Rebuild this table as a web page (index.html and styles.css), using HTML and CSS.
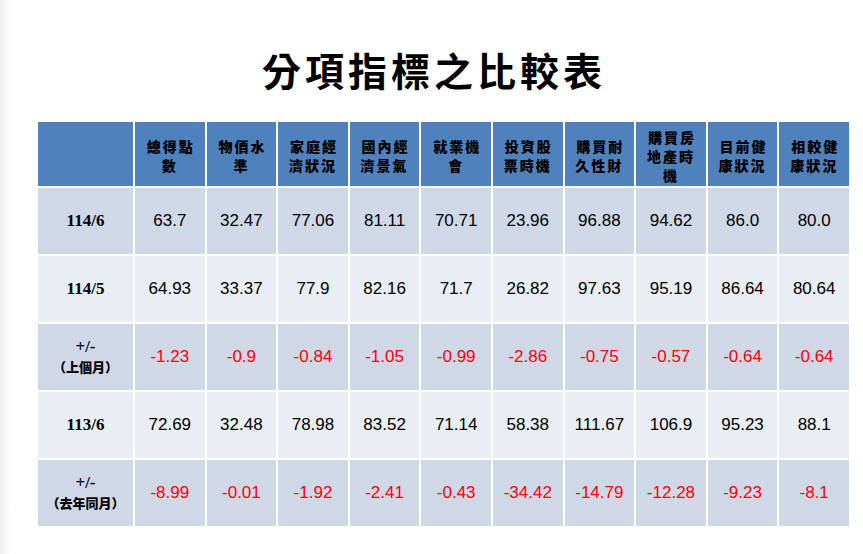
FILE: index.html
```html
<!DOCTYPE html>
<html lang="zh-Hant">
<head>
<meta charset="utf-8">
<title>分項指標之比較表</title>
<link rel="stylesheet" href="styles.css">
</head>
<body>
<div class="page">
  <h1 class="title">分項指標之比較表</h1>
  <table class="cmp">
    <colgroup>
      <col class="c-label">
      <col><col><col><col><col><col><col><col><col><col>
    </colgroup>
    <thead>
      <tr class="head">
        <th></th>
        <th>總得點<br>數</th>
        <th>物價水<br>準</th>
        <th>家庭經<br>濟狀況</th>
        <th>國內經<br>濟景氣</th>
        <th>就業機<br>會</th>
        <th>投資股<br>票時機</th>
        <th>購買耐<br>久性財</th>
        <th>購買房<br>地產時<br>機</th>
        <th>目前健<br>康狀況</th>
        <th>相較健<br>康狀況</th>
      </tr>
    </thead>
    <tbody>
      <tr class="odd">
        <th class="lbl">114/6</th>
        <td>63.7</td><td>32.47</td><td>77.06</td><td>81.11</td><td>70.71</td><td>23.96</td><td>96.88</td><td>94.62</td><td>86.0</td><td>80.0</td>
      </tr>
      <tr class="even">
        <th class="lbl">114/5</th>
        <td>64.93</td><td>33.37</td><td>77.9</td><td>82.16</td><td>71.7</td><td>26.82</td><td>97.63</td><td>95.19</td><td>86.64</td><td>80.64</td>
      </tr>
      <tr class="odd neg">
        <th class="lbl diff"><span class="pm">+/-</span><br><span class="sub">（上個月）</span></th>
        <td>-1.23</td><td>-0.9</td><td>-0.84</td><td>-1.05</td><td>-0.99</td><td>-2.86</td><td>-0.75</td><td>-0.57</td><td>-0.64</td><td>-0.64</td>
      </tr>
      <tr class="even">
        <th class="lbl">113/6</th>
        <td>72.69</td><td>32.48</td><td>78.98</td><td>83.52</td><td>71.14</td><td>58.38</td><td>111.67</td><td>106.9</td><td>95.23</td><td>88.1</td>
      </tr>
      <tr class="odd neg">
        <th class="lbl diff"><span class="pm">+/-</span><br><span class="sub">（去年同月）</span></th>
        <td>-8.99</td><td>-0.01</td><td>-1.92</td><td>-2.41</td><td>-0.43</td><td>-34.42</td><td>-14.79</td><td>-12.28</td><td>-9.23</td><td>-8.1</td>
      </tr>
    </tbody>
  </table>
</div>
</body>
</html>
```

FILE: styles.css
```css
html, body {
  margin: 0;
  padding: 0;
}
body {
  width: 863px;
  height: 554px;
  overflow: hidden;
  background: linear-gradient(to right, #ececec 0px, #f7f7f7 5px, #ffffff 12px);
  font-family: "Liberation Sans", Arial, "Noto Sans CJK TC", sans-serif;
}
.page {
  padding-top: 50px;
}
.title {
  margin: 0 0 31px 0;
  padding-left: 5px;
  text-align: center;
  font-family: "Noto Sans CJK TC", sans-serif;
  font-weight: 700;
  font-size: 39px;
  line-height: 39px;
  letter-spacing: 4px;
  color: #000;
}
.cmp {
  margin-left: 36px;
  width: 815px;
  table-layout: fixed;
  border-collapse: collapse;
  border: 2px solid #fff;
}
.c-label {
  width: 97px;
}
.cmp th, .cmp td {
  border: 2px solid #fff;
  padding: 0;
  text-align: center;
  vertical-align: middle;
}
.head th {
  background: #4f81bd;
  height: 66px;
  padding-top: 4px;
  box-sizing: border-box;
  font-family: "Noto Sans CJK TC", sans-serif;
  font-weight: 900;
  font-size: 14px;
  line-height: 19px;
  letter-spacing: 2px;
  color: #000;
}
.head th:not(:first-child) {
  text-indent: 2px;
}
tbody tr {
  height: 68px;
}
.odd th, .odd td {
  background: #d0d8e8;
}
.even th, .even td {
  background: #e9edf4;
}
.cmp td {
  font-family: "Liberation Sans", Arial, sans-serif;
  font-size: 17px;
  color: #000;
}
.neg td {
  color: #ff0000;
}
.lbl {
  font-family: "Liberation Serif", "Noto Sans CJK TC", serif;
  font-weight: 700;
  font-size: 17px;
  color: #000;
}
.diff {
  line-height: 20px;
  padding-top: 2px;
}
.pm {
  font-size: 17px;
}
.sub {
  font-family: "Noto Sans CJK TC", sans-serif;
  font-weight: 900;
  font-size: 13px;
  letter-spacing: 0px;
}
```
